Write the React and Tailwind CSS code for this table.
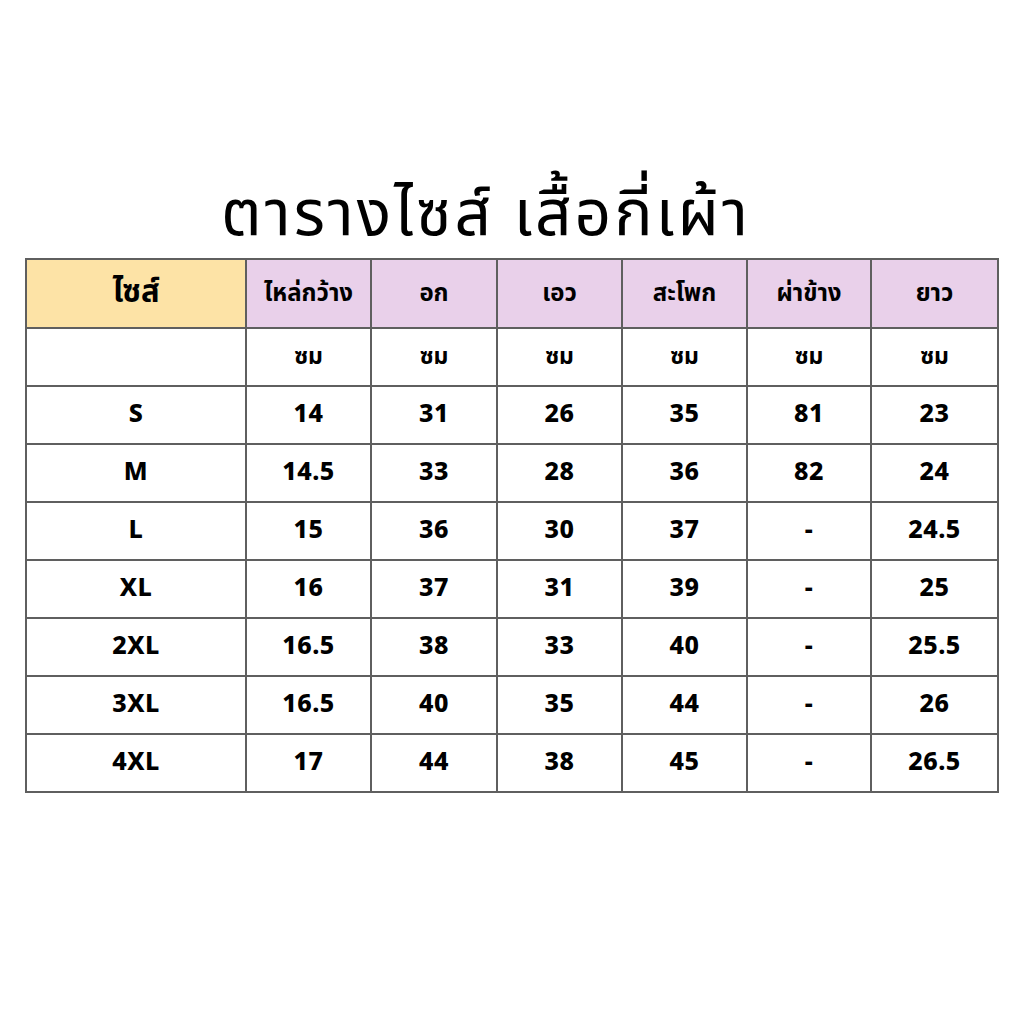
import React from "react";

const headers = ["ไหล่กว้าง", "อก", "เอว", "สะโพก", "ผ่าข้าง", "ยาว"];

const rows = [
  ["S", "14", "31", "26", "35", "81", "23"],
  ["M", "14.5", "33", "28", "36", "82", "24"],
  ["L", "15", "36", "30", "37", "-", "24.5"],
  ["XL", "16", "37", "31", "39", "-", "25"],
  ["2XL", "16.5", "38", "33", "40", "-", "25.5"],
  ["3XL", "16.5", "40", "35", "44", "-", "26"],
  ["4XL", "17", "44", "38", "45", "-", "26.5"],
];

const thai = { fontFamily: '"Noto Sans Thai", "Noto Sans", sans-serif' };

export default function App() {
  return (
    <div className="w-[1024px] h-[1024px] bg-white flex flex-col items-center">
      <h1
        className="mt-[176px] h-[82px] pr-[52px] text-[64px] leading-[80px] tracking-[3px] font-normal text-black"
        style={thai}
      >
        ตารางไซส์ เสื้อกี่เผ้า
      </h1>

      <table
        className="table-fixed border-collapse border-2 border-[#5f5f5f] text-black"
        style={thai}
      >
        <colgroup>
          <col className="w-[220px]" />
          <col className="w-[125px]" />
          <col className="w-[126px]" />
          <col className="w-[125px]" />
          <col className="w-[125px]" />
          <col className="w-[124px]" />
          <col className="w-[127px]" />
        </colgroup>
        <thead>
          <tr className="h-[69px]">
            <th className="border-2 border-[#5f5f5f] bg-[#fde3a6] text-[31px] font-bold">
              ไซส์
            </th>
            {headers.map((h) => (
              <th
                key={h}
                className="border-2 border-[#5f5f5f] bg-[#e9d0ea] text-[24px] font-bold"
              >
                {h}
              </th>
            ))}
          </tr>
        </thead>
        <tbody>
          <tr className="h-[58px]">
            <td className="border-2 border-[#5f5f5f]"></td>
            {headers.map((h) => (
              <td
                key={h}
                className="border-2 border-[#5f5f5f] text-center text-[23px] font-bold"
              >
                ซม
              </td>
            ))}
          </tr>
          {rows.map((r) => (
            <tr key={r[0]} className="h-[58px]">
              {r.map((c, i) => (
                <td
                  key={i}
                  className="border-2 border-[#5f5f5f] text-center text-[25px] font-extrabold tracking-[0.5px]"
                >
                  {c}
                </td>
              ))}
            </tr>
          ))}
        </tbody>
      </table>
    </div>
  );
}
